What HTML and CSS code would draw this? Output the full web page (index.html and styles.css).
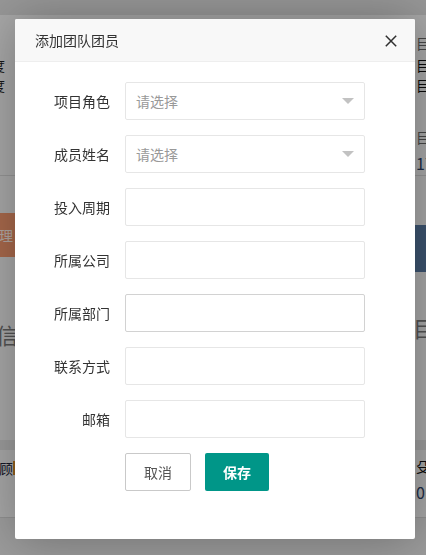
FILE: index.html
```html
<!DOCTYPE html>
<html lang="zh">
<head>
<meta charset="utf-8">
<title>添加团队团员</title>
<link rel="stylesheet" href="styles.css">
</head>
<body>
<div class="page">
  <div class="row r-top"></div>
  <div class="row r-info">
    <div class="side-l">
      <div class="clip-l t1">进度</div>
      <div class="clip-l t2">进度</div>
    </div>
    <div class="mid"></div>
    <div class="side-r">
      <div class="tr gray a1">目则</div>
      <div class="tr a2">目执</div>
      <div class="tr a3">目执</div>
      <div class="tr gray a4">目经</div>
      <div class="tr num a5">17</div>
    </div>
  </div>
  <div class="row r-tabs">
    <div class="side-l">
      <div class="tab-orange"><span>理</span></div>
      <div class="big-l">信</div>
    </div>
    <div class="mid"></div>
    <div class="side-r">
      <div class="tab-blue"></div>
      <div class="big-r">目</div>
    </div>
  </div>
  <div class="row r-band"></div>
  <div class="row r-list">
    <div class="side-l">
      <div class="clip-l t3">顾<i class="mark"></i></div>
    </div>
    <div class="mid"></div>
    <div class="side-r">
      <div class="tr b1">殳人</div>
      <div class="tr num b2">01</div>
    </div>
  </div>
  <div class="row r-foot"></div>
</div>

<div class="shade"></div>

<div class="layer">
  <div class="layer-title">添加团队团员</div>
  <button class="layer-close" type="button" aria-label="关闭">
    <svg width="12" height="12" viewBox="0 0 12 12"><path d="M0.8 0.8 L11.2 11.2 M11.2 0.8 L0.8 11.2" stroke="#2f2f2f" stroke-width="1.5" fill="none"/></svg>
  </button>
  <form class="form">
    <div class="form-item">
      <label class="form-label">项目角色</label>
      <div class="form-block">
        <div class="select"><span class="ph">请选择</span><i class="arrow"></i></div>
      </div>
    </div>
    <div class="form-item">
      <label class="form-label">成员姓名</label>
      <div class="form-block">
        <div class="select"><span class="ph">请选择</span><i class="arrow"></i></div>
      </div>
    </div>
    <div class="form-item">
      <label class="form-label">投入周期</label>
      <div class="form-block"><input class="input" type="text"></div>
    </div>
    <div class="form-item">
      <label class="form-label">所属公司</label>
      <div class="form-block"><input class="input" type="text"></div>
    </div>
    <div class="form-item">
      <label class="form-label">所属部门</label>
      <div class="form-block"><input class="input hover" type="text"></div>
    </div>
    <div class="form-item">
      <label class="form-label">联系方式</label>
      <div class="form-block"><input class="input" type="text"></div>
    </div>
    <div class="form-item">
      <label class="form-label">邮箱</label>
      <div class="form-block"><input class="input" type="text"></div>
    </div>
    <div class="form-item btns">
      <button class="btn btn-primary" type="button">取消</button>
      <button class="btn btn-ok" type="button">保存</button>
    </div>
  </form>
</div>
</body>
</html>
```

FILE: styles.css
```css
html, body {
  margin: 0;
  padding: 0;
}
body {
  font-family: "Noto Sans CJK SC", "Noto Sans", "Liberation Sans", sans-serif;
  font-size: 14px;
  color: #333;
  width: 426px;
  height: 555px;
  overflow: hidden;
  background: #f2f2f2;
}

/* ---------- background page ---------- */
.page {
  display: flex;
  flex-direction: column;
  height: 555px;
  overflow: hidden;
}
.row {
  display: flex;
  flex: none;
}
.side-l {
  width: 15px;
  flex: none;
  overflow: hidden;
  display: flex;
  flex-direction: column;
}
.mid { flex: 1; }
.side-r {
  width: 11px;
  flex: none;
  overflow: hidden;
  display: flex;
  flex-direction: column;
}
.r-top { height: 15px; background: #d8d8d8; }
.r-info { height: 160px; background: #efefef; border-bottom: 1px solid #d4d4d4; }
.clip-l {
  white-space: nowrap;
  margin-left: -23px;
  font-size: 14px;
  line-height: 20px;
  color: #222;
}
.t1 { margin-top: 40px; }
.t2 { margin-top: 0; }
.tr {
  white-space: nowrap;
  padding-left: 1px;
  font-size: 14px;
  line-height: 20px;
  color: #111;
}
.tr.gray { color: #666; }
.tr.num { color: #2b3f66; font-size: 16px; }
.a1 { margin-top: 18px; color: #55607a; }
.a2 { margin-top: 2px; }
.a3 { margin-top: 0; }
.a4 { margin-top: 32px; }
.a5 { margin-top: 6px; }

.r-tabs { height: 264px; background: #efefef; }
.tab-orange {
  margin-top: 37px;
  height: 44px;
  background: #f0966c;
  display: flex;
  align-items: center;
}
.tab-orange span {
  color: #fff;
  margin-left: -1px;
  font-size: 14px;
  opacity: 0.85;
}
.big-l {
  margin-top: 62px;
  font-size: 22px;
  line-height: 30px;
  color: #777;
  margin-left: -4px;
}
.tab-blue {
  margin-top: 49px;
  height: 47px;
  background: #56789f;
}
.big-r {
  margin-top: 40px;
  font-size: 22px;
  line-height: 30px;
  color: #777;
  margin-left: -2px;
}

.r-band { height: 10px; background: #dedede; }
.r-list { height: 67px; background: #efefef; border-bottom: 1px solid #cfcfcf; }
.t3 {
  margin-left: -1px;
  margin-top: 8px;
  color: #1c2236;
  display: flex;
  align-items: center;
}
.t3 .mark {
  display: inline-block;
  width: 3px;
  height: 14px;
  background: #d58a2a;
}
.b1 { margin-top: 6px; }
.b2 { margin-top: 6px; color: #777; }
.r-foot { flex: 1; background: #e0e0e0; }

.shade {
  position: fixed;
  left: 0;
  top: 0;
  right: 0;
  bottom: 0;
  background: rgba(0, 0, 0, 0.3);
}

/* ---------- dialog ---------- */
.layer {
  position: absolute;
  left: 15px;
  top: 19px;
  width: 400px;
  height: 520px;
  background: #fff;
  border-radius: 2px;
  box-shadow: 1px 1px 50px rgba(0, 0, 0, 0.3);
}
.layer-title {
  height: 42px;
  line-height: 42px;
  padding: 0 80px 0 20px;
  background: #f8f8f8;
  border-bottom: 1px solid #eee;
  border-radius: 2px 2px 0 0;
  color: #333;
  font-size: 14px;
}
.layer-close {
  position: absolute;
  right: 18px;
  top: 16px;
  width: 12px;
  height: 12px;
  padding: 0;
  margin: 0;
  border: 0;
  background: none;
  display: block;
}
.layer-close svg { display: block; }

.form {
  margin: 0;
  padding: 20px 0 0 0;
}
.form-item {
  display: flex;
  margin-bottom: 15px;
}
.form-label {
  width: 80px;
  padding: 9px 15px;
  line-height: 20px;
  text-align: right;
  color: #333;
  font-size: 14px;
  flex: none;
}
.form-block {
  width: 240px;
  flex: none;
}
.input, .select {
  box-sizing: border-box;
  display: block;
  width: 240px;
  height: 38px;
  border: 1px solid #e6e6e6;
  border-radius: 2px;
  background: #fff;
  margin: 0;
  padding: 0 10px;
  font-family: inherit;
  font-size: 14px;
  outline: none;
}
.input.hover { border-color: #d2d2d2; }
.select {
  position: relative;
  line-height: 36px;
}
.ph { color: #999; }
.arrow {
  position: absolute;
  right: 10px;
  top: 50%;
  margin-top: -3px;
  width: 0;
  height: 0;
  border-top: 6px solid #c2c2c2;
  border-left: 6px solid transparent;
  border-right: 6px solid transparent;
}
.btns {
  padding-left: 110px;
  gap: 14px;
}
.btn {
  box-sizing: border-box;
  height: 38px;
  line-height: 36px;
  padding: 0 18px;
  font-family: inherit;
  font-size: 14px;
  border-radius: 2px;
  margin: 0;
  white-space: nowrap;
  cursor: pointer;
}
.btn-primary {
  border: 1px solid #c9c9c9;
  background: #fff;
  color: #555;
}
.btn-ok {
  border: 0;
  line-height: 38px;
  background: #009688;
  color: #fff;
  font-weight: bold;
}
```
